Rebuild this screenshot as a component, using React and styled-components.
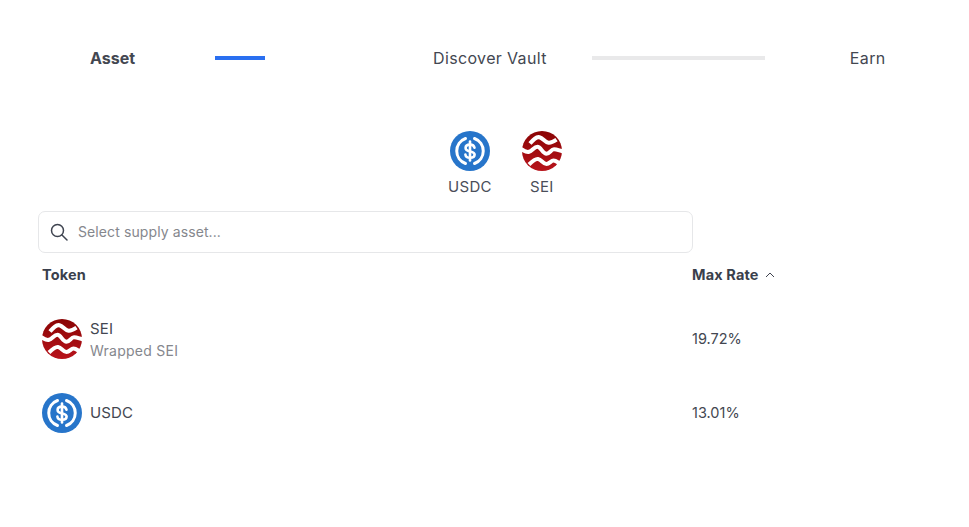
import React from "react";
import styled, { createGlobalStyle } from "styled-components";

const GlobalStyle = createGlobalStyle`
  html, body {
    margin: 0;
    padding: 0;
    background: #fff;
    font-family: "Inter", "Noto Sans", sans-serif;
    color: #3f4450;
  }
`;

const Page = styled.div`
  width: 969px;
  height: 527px;
  box-sizing: border-box;
  padding: 46px 38px 0;
  overflow: hidden;
`;

const Stepper = styled.div`
  display: flex;
  align-items: center;
  height: 24px;
  margin-bottom: 61px;
`;

const StepLabel = styled.span`
  font-size: 16px;
  line-height: 24px;
  font-weight: ${(p) => (p.$active ? 700 : 400)};
  letter-spacing: ${(p) => (p.$active ? 0 : 0.35)}px;
  color: #434751;
  white-space: nowrap;
  margin-left: ${(p) => p.$left}px;
`;

const StepBar = styled.div`
  height: 4px;
  width: ${(p) => p.$width}px;
  margin-left: ${(p) => p.$left}px;
  background: ${(p) => (p.$active ? "#2a6ff0" : "#e9e9ea")};
`;

const Picked = styled.div`
  display: flex;
  gap: 30px;
  margin-left: 410px;
  margin-bottom: 14px;
`;

const PickedItem = styled.div`
  display: flex;
  flex-direction: column;
  align-items: center;
  gap: 6px;
  font-size: 15px;
  line-height: 20px;
  letter-spacing: 0.3px;
  color: #4a4e59;
`;

const SearchBox = styled.div`
  width: 655px;
  height: 42px;
  box-sizing: border-box;
  border: 1px solid #e6e7e9;
  border-radius: 7px;
  display: flex;
  align-items: center;
  gap: 10px;
  padding-left: 11px;
  margin-bottom: 10px;
`;

const SearchText = styled.span`
  font-size: 14px;
  line-height: 16px;
  padding-bottom: 1px;
  letter-spacing: 0.1px;
  color: #85878d;
`;

const TableGrid = styled.div`
  display: grid;
  grid-template-columns: 650px 1fr;
  padding-left: 4px;
  align-items: center;
`;

const HeadRow = styled(TableGrid)`
  height: 24px;
  margin-bottom: 32px;
  font-size: 14.5px;
  line-height: 18px;
  font-weight: 700;
  letter-spacing: 0.15px;
  color: #3a3f4c;
`;

const SortCell = styled.div`
  display: flex;
  align-items: center;
  gap: 6px;
`;

const Row = styled(TableGrid)`
  grid-template-rows: 40px;
  height: 40px;
  margin-bottom: 34px;
`;

const TokenCell = styled.div`
  display: flex;
  align-items: center;
  gap: 8px;
`;

const TokenNames = styled.div`
  display: flex;
  flex-direction: column;
  padding-top: ${(p) => (p.$double ? 2 : 0)}px;
`;

const TokenName = styled.span`
  font-size: 15px;
  line-height: 20px;
  letter-spacing: 0.15px;
  color: #434751;
`;

const TokenSub = styled.span`
  font-size: 14px;
  line-height: 20px;
  margin-top: 2px;
  letter-spacing: 0.25px;
  color: #85878d;
`;

const Rate = styled.span`
  font-size: 14.5px;
  line-height: 18px;
  color: #434751;
`;

const UsdcIcon = () => (
  <svg width="40" height="40" viewBox="0 0 40 40" style={{ display: "block" }}>
    <circle cx="20" cy="20" r="20" fill="#2775ca" />
    <path
      d="M15.5 7.5a13.3 13.3 0 0 0 0 25M24.5 7.5a13.3 13.3 0 0 1 0 25"
      fill="none"
      stroke="#fff"
      strokeWidth="3"
      strokeLinecap="round"
    />
    <path
      d="M24.5 16.800c-.4-2.200-2-3.200-4.500-3.200s-4.400 1.300-4.400 3.300c0 4.900 9 2.300 9 6.700 0 2.100-2 3.200-4.600 3.200s-4.300-1.200-4.600-3.200"
      fill="none"
      stroke="#fff"
      strokeWidth="2.600"
      strokeLinecap="round"
    />
    <path d="M20 10.500v19" stroke="#fff" strokeWidth="2.600" strokeLinecap="round" />
  </svg>
);

const SeiIcon = ({ id }) => (
  <svg width="40" height="40" viewBox="0 0 40 40" style={{ display: "block" }}>
    <defs>
      <linearGradient id={id} x1="0" y1="0" x2="0" y2="1">
        <stop offset="0" stopColor="#8a0404" />
        <stop offset="1" stopColor="#b8141c" />
      </linearGradient>
    </defs>
    <circle cx="20" cy="20" r="20" fill={`url(#${id})`} />
    <g fill="none" stroke="#fff" strokeWidth="4">
      <path d="M8 12.500c3.500-4 6-7 9.500-6.300 3.500.8 5 5 9 5.500 2.500.3 5-1 8-3" />
      <path d="M-1 18c3 2 5.500 3.500 8 2.800 3.500-1 5-5 8.500-5 3.500 0 5 7 9 7 3.500 0 4.500-4.500 7.500-4.500 3 0 6 1.500 9 2" />
      <path d="M7 33.500c3-3 6-6 9-5.500 3.500.6 5 5 8.500 5 3 0 4.500-3.500 7-3.500 2 0 3.500 1.200 5.500 2.500" />
    </g>
  </svg>
);

const SearchIcon = () => (
  <svg width="18" height="18" viewBox="0 0 18 18" fill="none" stroke="#3f4450" strokeWidth="1.5" strokeLinecap="round">
    <circle cx="7.500" cy="7.500" r="6" />
    <path d="M12 12l5 5" />
  </svg>
);

const ChevronUp = () => (
  <svg width="10" height="6" viewBox="0 0 10 6" fill="none" stroke="#3f4450" strokeWidth="1">
    <path d="M1 5l4-4 4 4" />
  </svg>
);

const tokens = [
  { name: "SEI", sub: "Wrapped SEI", rate: "19.72%", icon: <SeiIcon id="sei-row" /> },
  { name: "USDC", rate: "13.01%", icon: <UsdcIcon /> },
];

export default function App() {
  return (
    <Page>
      <GlobalStyle />
      <Stepper>
        <StepLabel $active $left={52}>Asset</StepLabel>
        <StepBar $active $left={80} $width={50} />
        <StepLabel $left={168}>Discover Vault</StepLabel>
        <StepBar $left={45} $width={173} />
        <StepLabel $left={85}>Earn</StepLabel>
      </Stepper>
      <Picked>
        <PickedItem>
          <UsdcIcon />
          USDC
        </PickedItem>
        <PickedItem>
          <SeiIcon id="sei-picked" />
          SEI
        </PickedItem>
      </Picked>
      <SearchBox>
        <SearchIcon />
        <SearchText>Select supply asset...</SearchText>
      </SearchBox>
      <HeadRow>
        <span>Token</span>
        <SortCell>
          Max Rate
          <ChevronUp />
        </SortCell>
      </HeadRow>
      {tokens.map((t) => (
        <Row key={t.name}>
          <TokenCell>
            {t.icon}
            <TokenNames $double={!!t.sub}>
              <TokenName>{t.name}</TokenName>
              {t.sub && <TokenSub>{t.sub}</TokenSub>}
            </TokenNames>
          </TokenCell>
          <Rate>{t.rate}</Rate>
        </Row>
      ))}
    </Page>
  );
}
